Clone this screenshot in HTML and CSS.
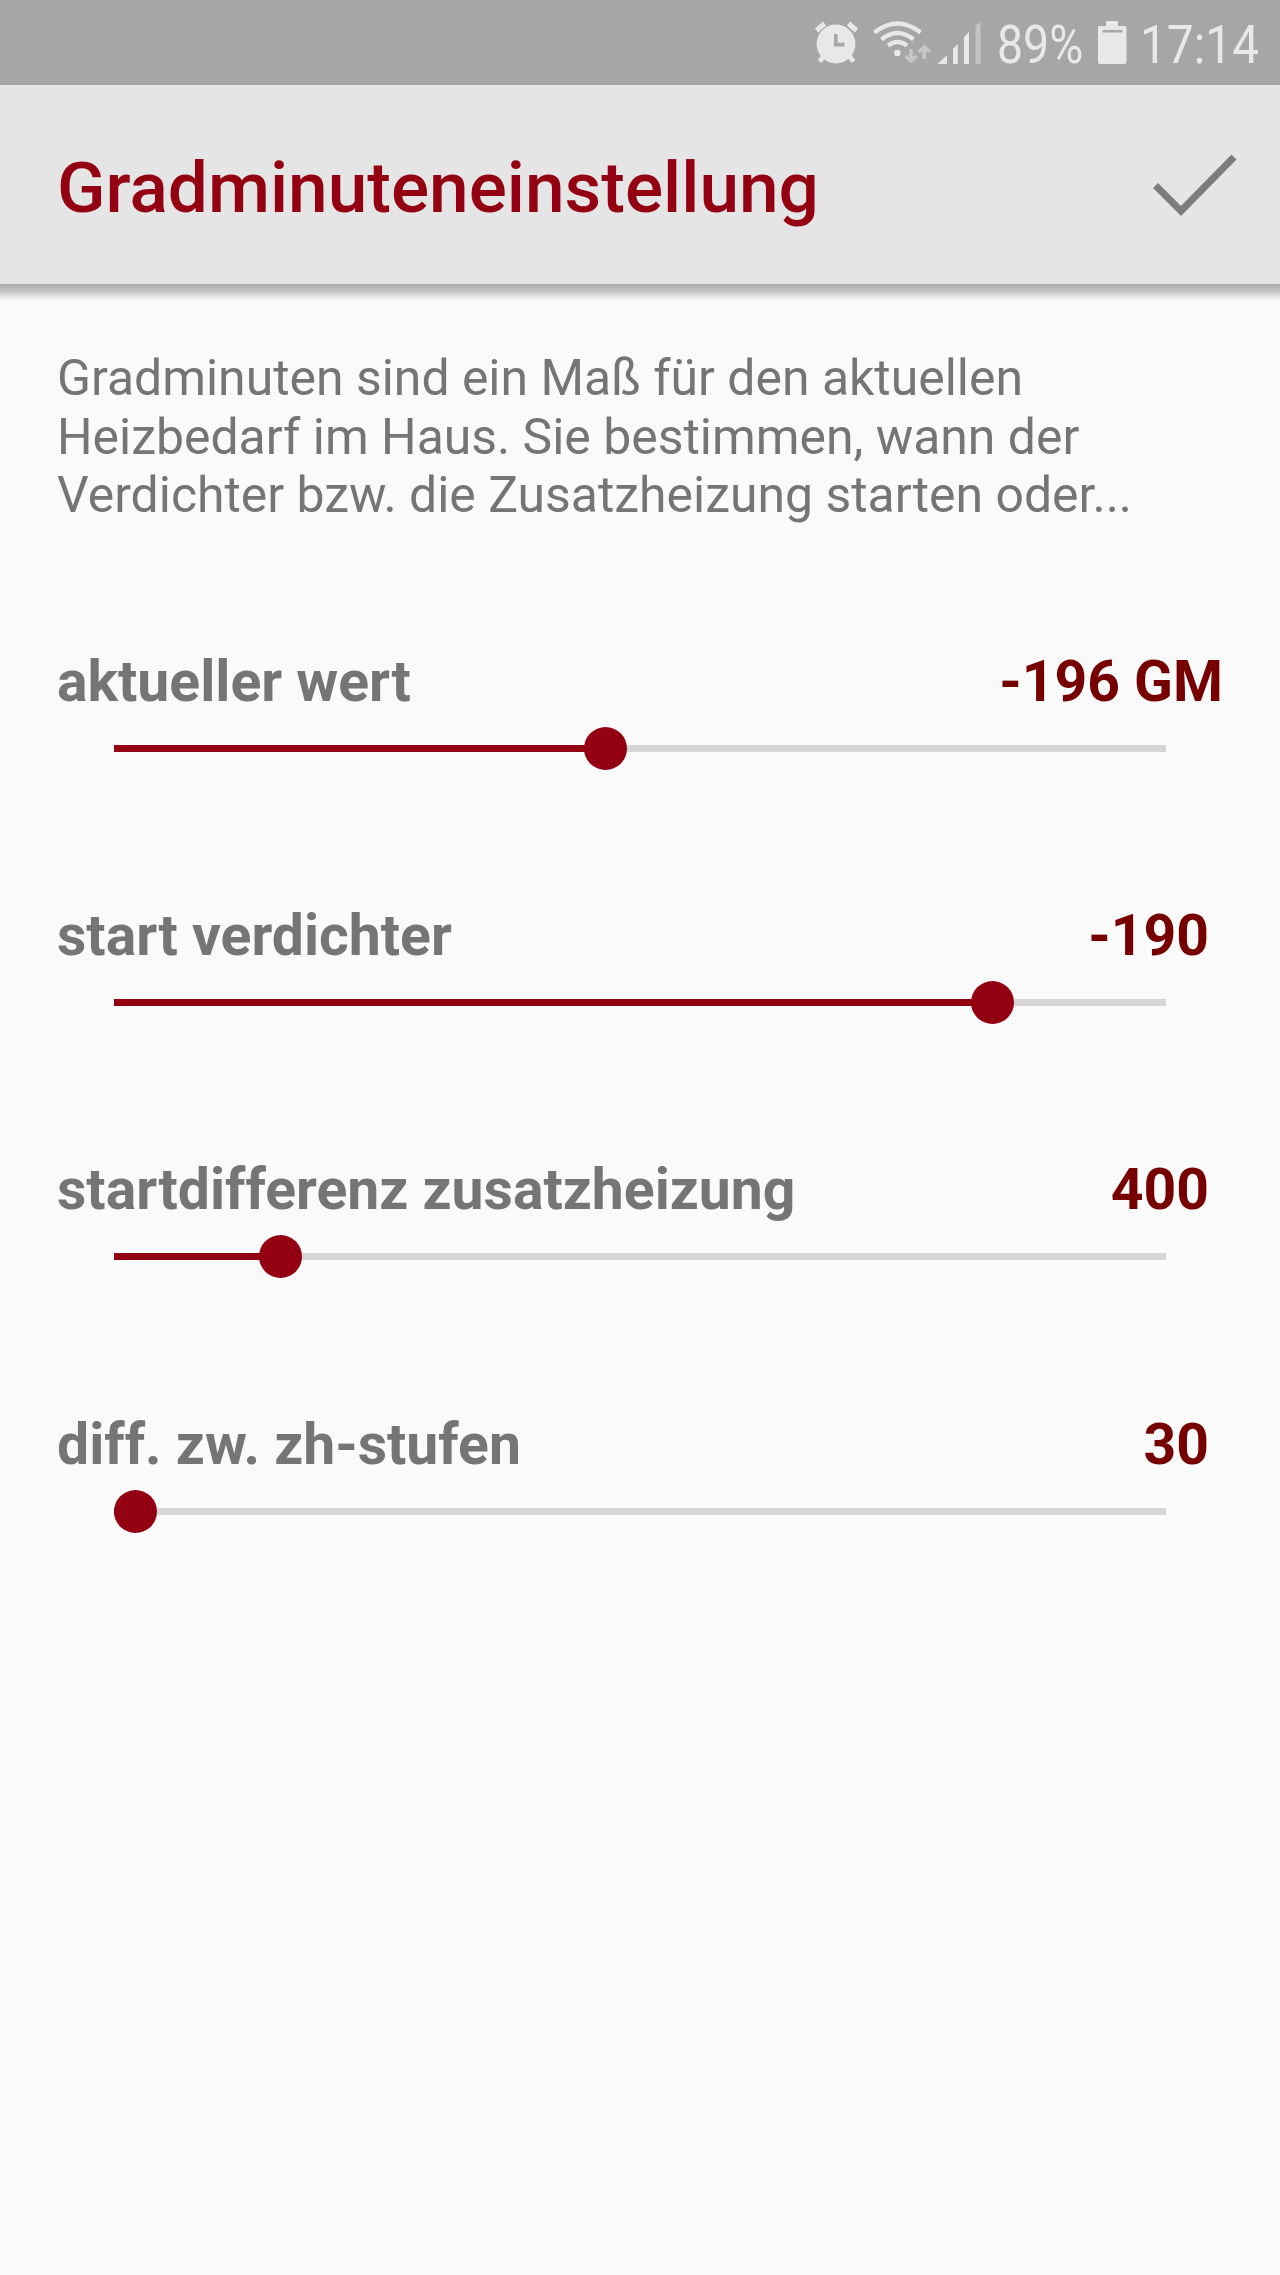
FILE: index.html
```html
<!DOCTYPE html>
<html lang="de">
<head>
<meta charset="utf-8">
<title>Gradminuteneinstellung</title>
<link rel="stylesheet" href="styles.css">
</head>
<body>
<div class="statusbar">
  <svg class="status-icons" width="184" height="85" viewBox="0 0 184 85" aria-hidden="true">
    <g fill="none" stroke="#e8e8e8">
      <path d="M1.5 30.5 9.5 23.5M33.5 23.5 41.5 30.5" stroke-width="5"/>
      <path d="M9 56 4.500 61.500M34 56 38.500 61.500" stroke-width="4.500"/>
      <path d="M59.500 32.500Q82.500 14.500 105.500 32.500M66.500 39.500Q82.500 26.500 98.500 39.500M73 45.500Q82.500 38.500 92 45.500" stroke-width="4.200"/>
    </g>
    <circle cx="21" cy="44" r="19.400" fill="#e8e8e8"/>
    <path d="M20.800 34V44.600H29.500" fill="none" stroke="#a6a6a6" stroke-width="3.600"/>
    <circle cx="82.300" cy="53" r="3.300" fill="#e8e8e8"/>
    <path d="M96 49V61M90.500 56 96 61 101.500 56M109.300 59V47M103.800 52 109.300 47 114.800 52" fill="none" stroke="#c6c6c6" stroke-width="3.600"/>
    <path d="M122.500 64 132 55V64ZM138 48.500 142.800 44V64H138ZM149 37 154 32V64H149Z" fill="#e8e8e8"/>
    <path d="M160.500 26 165.500 21V64H160.500Z" fill="#c3c3c3"/>
  </svg>
  <span class="status-text percent">89%</span>
  <svg class="battery" width="29" height="85" viewBox="0 0 29 85" aria-hidden="true">
    <path d="M8 21H20V26H27Q28.500 26 28.500 27.500V62Q28.500 64 26.500 64H2Q0 64 0 62V27.500Q0 26 1.500 26H8Z" fill="#e8e8e8"/>
    <path d="M4.500 30H24.500V32.500H4.500Z" fill="#a6a6a6"/>
  </svg>
  <span class="status-text clock">17:14</span>
</div>
<header class="toolbar">
  <h1 class="title">Gradminuteneinstellung</h1>
  <svg class="check" width="84" height="62" viewBox="0 0 84 62" role="img" aria-label="OK">
    <path d="M2.500 31.500 28 57 81 3" fill="none" stroke="#7c7c7c" stroke-width="7"/>
  </svg>
</header>
<div class="shadow"></div>
<main class="content">
  <p class="description">Gradminuten sind ein Maß für den aktuellen<br>Heizbedarf im Haus. Sie bestimmen, wann der<br>Verdichter bzw. die Zusatzheizung starten oder...</p>
  <section class="setting">
    <div class="row"><span>aktueller wert</span><span class="value with-unit">-196 GM</span></div>
    <div class="slider"><div class="fill" style="width:492px"></div><div class="thumb"></div></div>
  </section>
  <section class="setting">
    <div class="row"><span>start verdichter</span><span class="value">-190</span></div>
    <div class="slider"><div class="fill" style="width:879.3px"></div><div class="thumb"></div></div>
  </section>
  <section class="setting">
    <div class="row"><span>startdifferenz zusatzheizung</span><span class="value">400</span></div>
    <div class="slider"><div class="fill" style="width:166.5px"></div><div class="thumb"></div></div>
  </section>
  <section class="setting">
    <div class="row"><span>diff. zw. zh-stufen</span><span class="value">30</span></div>
    <div class="slider"><div class="fill" style="width:21.500px"></div><div class="thumb"></div></div>
  </section>
</main>
</body>
</html>
```
FILE: styles.css
```css
* { box-sizing: border-box; }
body {
  margin: 0;
  min-height: 2275px;
  background: #fafafa;
  color: #757575;
  font-family: Roboto, sans-serif;
}
.statusbar {
  display: flex;
  height: 85px;
  padding-left: 815px;
  background: #a6a6a6;
  color: #e8e8e8;
}
.status-icons { flex: none; }
.status-text {
  flex: none;
  font-size: 54px;
  line-height: 89px;
  white-space: nowrap;
  transform: scaleX(.86);
  transform-origin: left;
}
.percent { width: 99px; margin-left: -2px; }
.battery { flex: none; margin-left: 2px; }
.clock { width: 120px; margin-left: 13px; transform: scaleX(.885); }
.toolbar {
  display: flex;
  align-items: center;
  justify-content: space-between;
  height: 199px;
  padding: 0 43px 0 57px;
  background: #e5e5e5;
}
.title {
  margin: 6px 0 0;
  color: #930011;
  font-size: 71.2px;
  font-weight: 500;
  line-height: 84px;
}
.shadow {
  height: 17px;
  background: linear-gradient(#adadad, #c4c4c4 45%, #e8e8e8 78%, #fafafa);
}
.content { padding: 48px 57px 0; }
.description {
  margin: 0;
  font-size: 49.92px;
  line-height: 58.67px;
  white-space: nowrap;
}
.setting { height: 254.33px; }
.description + .setting { margin-top: 123.5px; }
.row {
  display: flex;
  justify-content: space-between;
  height: 72px;
  font-size: 57.1px;
  font-weight: 700;
  line-height: 66px;
}
.value { padding-right: 14px; color: #760000; }
.with-unit { padding-right: 0; }
.slider {
  display: flex;
  align-items: center;
  height: 43px;
  margin: 6px 57px 0 56.500px;
  background: linear-gradient(#d6d6d6, #d6d6d6) center / 100% 7px no-repeat;
}
.fill { flex: none; height: 7px; background: #930011; }
.thumb {
  flex: none;
  width: 43px;
  height: 43px;
  margin-left: -21.500px;
  border-radius: 50%;
  background: #930011;
}
```
